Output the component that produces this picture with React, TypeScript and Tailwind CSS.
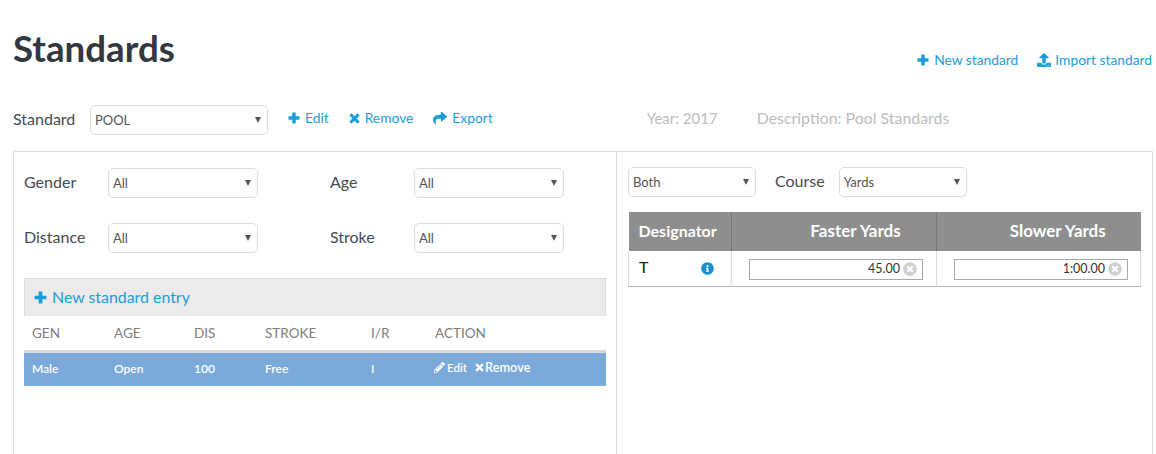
import React from 'react';
import { FaShare, FaUpload, FaPencilAlt, FaInfoCircle, FaTimesCircle } from 'react-icons/fa';

const PlusIcon = ({ className = '' }: { className?: string }) => (
  <svg viewBox="0 0 12 12" className={className} fill="none" stroke="currentColor" strokeWidth="3.4">
    <path d="M6 0.5v11M0.5 6h11" />
  </svg>
);

const CrossIcon = ({ className = '' }: { className?: string }) => (
  <svg viewBox="0 0 12 12" className={className} fill="none" stroke="currentColor" strokeWidth="3.2">
    <path d="M1.5 1.5l9 9M10.5 1.5l-9 9" />
  </svg>
);

const LinkItem = ({ icon, label }: { icon: React.ReactNode; label: string }) => (
  <a className="flex items-center gap-[5px] text-[13.8px] text-[#1b9dd9]">
    {icon}
    <span>{label}</span>
  </a>
);

const Select = ({ value, width }: { value: string; width: string }) => (
  <div className={`relative h-[30px] shrink-0 ${width}`}>
    <select
      defaultValue={value}
      className="h-full w-full appearance-none rounded-[5px] border border-[#dcdcdc] bg-white pt-[2px] pl-[4px] text-[13px] text-[#555] outline-none"
    >
      <option>{value}</option>
    </select>
    <svg viewBox="0 0 6 6" className="pointer-events-none absolute top-[12px] right-[7px] h-[6px] w-[6px] text-[#555]">
      <path d="M0 0h6L3 6z" fill="currentColor" />
    </svg>
  </div>
);

const Filter = ({ label, value }: { label: string; value: string }) => (
  <div className="flex items-start">
    <label className="w-[84px] pt-[2px] text-[16px] text-[#444b53]">{label}</label>
    <Select value={value} width="w-[150px]" />
  </div>
);

const TimeInput = ({ value }: { value: string }) => (
  <div className="flex h-[21px] w-[174px] items-center justify-end gap-[3px] border border-[#a9a9a9] bg-white pr-[5px] text-[12.5px] text-[#333]">
    <span>{value}</span>
    <FaTimesCircle className="h-[14px] w-[14px] text-[#cfcfcf]" />
  </div>
);

export default function App() {
  return (
    <div className="h-[454px] overflow-hidden bg-white pr-[3px] pl-[13px] font-['Lato',sans-serif]">
      <div className="flex items-start justify-between pt-[28px]">
        <h1 className="text-[36.7px] leading-[40px] font-bold text-[#33383f]">Standards</h1>
        <div className="flex gap-[19px] pt-[22px] pr-[1px]">
          <LinkItem icon={<PlusIcon className="h-[12px] w-[12px]" />} label="New standard" />
          <LinkItem icon={<FaUpload className="-mr-[1px] h-[14px] w-[14px]" />} label="Import standard" />
        </div>
      </div>

      <div className="mt-[34px] flex h-[30px] items-center">
        <label className="-mt-[2px] w-[77px] text-[16px] text-[#444b53]">Standard</label>
        <Select value="POOL" width="w-[178px]" />
        <div className="ml-[20px] -mt-[3px] flex gap-[20px]">
          <LinkItem icon={<PlusIcon className="h-[12px] w-[12px]" />} label="Edit" />
          <LinkItem icon={<CrossIcon className="h-[11px] w-[11px]" />} label="Remove" />
          <LinkItem icon={<FaShare className="h-[14px] w-[14px]" />} label="Export" />
        </div>
        <div className="ml-[154px] -mt-[3px] flex items-center gap-[39px] text-[#bdbdbd]">
          <span className="text-[15px]">Year: 2017</span>
          <span className="text-[15.9px]">Description: Pool Standards</span>
        </div>
      </div>

      <div className="mt-[16px] flex h-[340px] border border-[#dcdcdc]">
        <div className="w-[603px] shrink-0 border-r border-[#dcdcdc] pt-[16px] pl-[10px]">
          <div className="grid w-[540px] grid-cols-[306px_1fr] gap-y-[25px]">
            <Filter label="Gender" value="All" />
            <Filter label="Age" value="All" />
            <Filter label="Distance" value="All" />
            <Filter label="Stroke" value="All" />
          </div>

          <div className="mt-[25px] w-[582px]">
            <div className="flex h-[38px] items-center gap-[5px] border border-b-0 border-[#dcdcdc] bg-[#eceaeb] pl-[9px] text-[15.9px] text-[#1b9dd9]">
              <PlusIcon className="h-[13px] w-[13px]" />
              <span>New standard entry</span>
            </div>
            <table className="w-full table-fixed border-collapse text-left">
              <thead>
                <tr className="h-[36px] border-b-[3px] border-[#d9d9d9] text-[13.5px] text-[#7d7d7d]">
                  <th className="w-[82px] pl-[8px] font-normal">GEN</th>
                  <th className="w-[80px] pl-[8px] font-normal">AGE</th>
                  <th className="w-[71px] pl-[8px] font-normal">DIS</th>
                  <th className="w-[106px] pl-[8px] font-normal">STROKE</th>
                  <th className="w-[64px] pl-[8px] font-normal">I/R</th>
                  <th className="pl-[8px] font-normal">ACTION</th>
                </tr>
              </thead>
              <tbody>
                <tr className="h-[34px] bg-[#7ba9da] text-[12px] font-semibold text-white">
                  <td className="pl-[8px]">Male</td>
                  <td className="pl-[8px]">Open</td>
                  <td className="pl-[8px]">100</td>
                  <td className="pl-[8px]">Free</td>
                  <td className="pl-[8px]">I</td>
                  <td className="pl-[7px]">
                    <div className="-mt-[4px] flex items-center">
                      <FaPencilAlt className="mr-[2px] h-[11px] w-[11px]" />
                      <span className="text-[11.5px]">Edit</span>
                      <CrossIcon className="mr-[1px] ml-[8px] h-[9px] w-[9px]" />
                      <span className="text-[12.8px]">Remove</span>
                    </div>
                  </td>
                </tr>
              </tbody>
            </table>
          </div>
        </div>

        <div className="flex-1 pt-[15px] pl-[11px]">
          <div className="flex h-[30px] items-center">
            <Select value="Both" width="w-[128px]" />
            <label className="mr-[14px] ml-[19px] -mt-[2px] text-[16px] text-[#444b53]">Course</label>
            <Select value="Yards" width="w-[128px]" />
          </div>

          <table className="mt-[15px] w-[513px] table-fixed border-collapse">
            <thead>
              <tr className="h-[39px] bg-[#8e8e8e] font-bold text-white">
                <th className="w-[103px] border-r border-[#777] pl-[10px] text-left text-[16px] font-bold">Designator</th>
                <th className="w-[205px] border-r border-[#777] pl-[43px] text-[17px] font-bold">Faster Yards</th>
                <th className="pl-[38px] text-[17px] font-bold">Slower Yards</th>
              </tr>
            </thead>
            <tbody>
              <tr className="h-[36px] border-x border-b border-x-[#dcdcdc] border-b-[#b5b5b5]">
                <td className="border-r border-[#dcdcdc] pl-[10px]">
                  <div className="flex items-center justify-between pr-[17px] text-[16px] text-[#222]">
                    <span className="-mt-[2px]">T</span>
                    <FaInfoCircle className="h-[13px] w-[13px] text-[#1b8fd2]" />
                  </div>
                </td>
                <td className="border-r border-[#dcdcdc] pt-[2px] pl-[17px]">
                  <TimeInput value="45.00" />
                </td>
                <td className="pt-[2px] pl-[17px]">
                  <TimeInput value="1:00.00" />
                </td>
              </tr>
            </tbody>
          </table>
        </div>
      </div>
    </div>
  );
}
